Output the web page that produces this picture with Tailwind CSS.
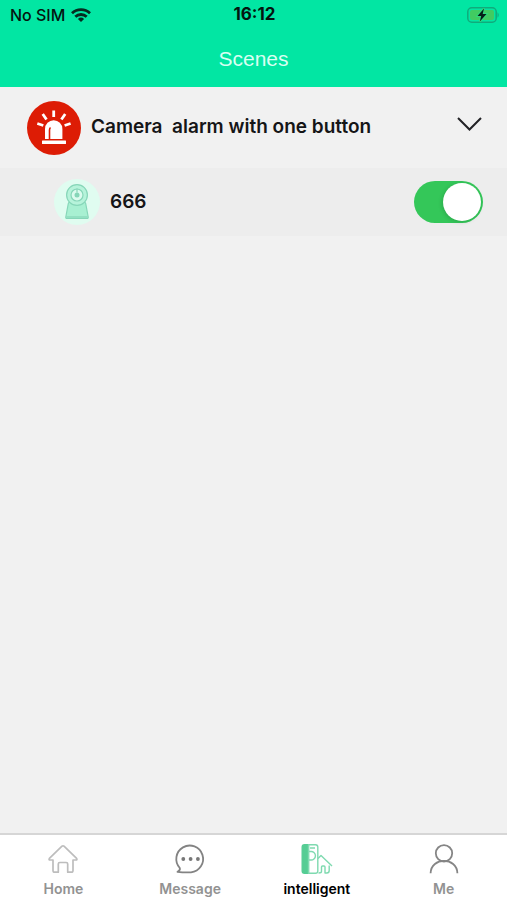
<!DOCTYPE html>
<html lang="en">
<head>
<meta charset="utf-8">
<meta name="viewport" content="width=device-width, initial-scale=1">
<title>Scenes</title>
<script src="https://cdn.jsdelivr.net/npm/@tailwindcss/browser@4"></script>
</head>
<body class="flex min-h-screen flex-col bg-[#f1f1f1] font-['Inter','Liberation_Sans',sans-serif] text-[#151517]">
  <header class="bg-[#02e6a3]">
    <div class="grid h-7 grid-cols-3 items-center pt-px pr-2 pl-2.5 text-[#04150f]">
      <div class="flex items-center gap-1.5 text-base font-medium">
        <span>No SIM</span>
        <svg class="h-4 w-5" viewBox="0 0 20 16" fill="none" stroke="#062b20" stroke-width="2.8" aria-label="Wi-Fi">
          <path d="M1 6.2a13 13 0 0 1 18 0"/>
          <path d="M4.3 9.8a8.2 8.2 0 0 1 11.400 0"/>
          <path d="M10 15 6.900 12a4.500 4.500 0 0 1 6.200 0z" fill="#062b20" stroke="none"/>
        </svg>
      </div>
      <time class="text-center text-[17px] font-bold">16:12</time>
      <svg class="h-4 w-8 justify-self-end" viewBox="0 0 32 16" aria-label="Battery charging">
        <rect x="0.8" y="0.8" width="28.4" height="14.4" rx="4" fill="none" stroke="#10ab7c" stroke-width="1.5"/>
        <rect x="3" y="3" width="24" height="10" rx="2" fill="#42cb61"/>
        <path d="M30.5 5.500c1.600.6 1.600 4.400 0 5z" fill="#10ab7c"/>
        <path d="M17 1.500 10.500 9h3.700l-1.400 5.500L19.500 7h-3.800z" fill="#052018" stroke="#30d87c" stroke-width="2" paint-order="stroke"/>
      </svg>
    </div>
    <h1 class="flex h-[59px] items-center justify-center pt-0.5 font-['Liberation_Sans',sans-serif] text-[21px] text-[#d9fff2]">Scenes</h1>
  </header>

  <main class="flex-1">
    <button type="button" aria-expanded="true" aria-controls="devices" class="flex h-[81px] w-full items-center gap-2.5 pr-6 pl-[27px] text-left">
      <svg class="size-[54px] shrink-0" viewBox="0 0 54 54" aria-hidden="true">
        <circle cx="27" cy="27" r="27" fill="#dd1c05"/>
        <path d="M26.700 9.500v6.500M15.700 13l3.800 5.500M38.200 13l-3.800 5.500M10.300 22.500l6 2M43.600 22.500l-6 2" stroke="#fff" stroke-width="2.800"/>
        <path d="M18 38V28a8.700 8.700 0 0 1 17.400 0v10z" fill="#fff"/>
        <path d="M22.500 38V29q0-1.500 1-2.500" fill="none" stroke="#dd1c05" stroke-width="1.600"/>
        <rect x="15" y="39.500" width="24" height="3.600" rx="0.500" fill="#fff"/>
      </svg>
      <span class="flex-1 whitespace-pre text-[19px] font-semibold">Camera  alarm with one button</span>
      <svg class="mb-2 h-4 w-[27px] shrink-0" viewBox="0 0 27 16" fill="none" stroke="#222226" stroke-width="2" aria-hidden="true">
        <path d="M2 2l11.500 11.500L25 2"/>
      </svg>
    </button>

    <div id="devices" class="flex h-[68px] items-center gap-2.5 bg-[#ededed] pr-6 pl-[54px]">
      <svg class="size-[46px] shrink-0" viewBox="0 0 46 46" fill="none" stroke="#86d6b8" stroke-width="1.200" aria-hidden="true">
        <circle cx="23" cy="23" r="23" fill="#e0fcf0" stroke="none"/>
        <path d="M15.200 23.500h15.600q.7 0 .9 1l2.500 13.500q.2 1.500-1.200 1.500H13q-1.400 0-1.200-1.500l2.500-13.500q.2-1 .9-1z" fill="#a8f0d2"/>
        <circle cx="23" cy="16" r="10.400" fill="#b6f3da"/>
        <circle cx="23" cy="16" r="6" fill="#dcfbee"/>
        <circle cx="23" cy="16" r="2.500" fill="#86d6b8" stroke="none"/>
        <path d="M23 9.500v4"/>
        <path d="M12.500 38h21"/>
      </svg>
      <label for="device-666" class="flex-1 text-[19px] font-semibold">666</label>
      <input id="device-666" type="checkbox" role="switch" checked class="flex h-[42px] w-[69px] shrink-0 appearance-none items-center justify-start rounded-full bg-[#c8c8c8] px-0.5 before:size-[38px] before:rounded-full before:bg-white before:shadow-[-1px_1px_4px_rgba(0,0,0,0.15)] before:content-[''] checked:justify-end checked:bg-[#34c759]">
    </div>
  </main>

  <nav class="grid grid-cols-4 border-t-2 border-[#d6d6d6] bg-white pt-2 pb-px text-sm font-semibold text-[#929292]">
    <a href="#home" class="flex flex-col items-center gap-1">
      <svg class="size-8" viewBox="0 0 32 32" fill="none" stroke="#bdbdbd" stroke-width="1.700" stroke-linejoin="round" aria-hidden="true">
        <path d="M15 3.200q1-.8 2 0l12.600 12.200q1 1.400-.8 1.600H26v10.500q0 1.700-1.700 1.700h-3.600V21q0-1.500-1.500-1.500h-6.400q-1.500 0-1.500 1.500v8.200H7.700Q6 29.200 6 27.500V17H3.200q-1.800-.2-.8-1.600z"/>
      </svg>
      <span>Home</span>
    </a>
    <a href="#message" class="flex flex-col items-center gap-1">
      <svg class="size-8" viewBox="0 0 32 32" fill="none" stroke="#838383" stroke-width="1.800" stroke-linejoin="round" aria-hidden="true">
        <path d="M3.500 28.800q3-1.500 2.300-3.800A13.400 13.400 0 1 1 17 29.300q-7 .3-13.500-.5z"/>
        <g fill="#777" stroke="none"><circle cx="9.300" cy="16" r="1.900"/><circle cx="16.600" cy="16" r="1.900"/><circle cx="23.900" cy="16" r="1.900"/></g>
      </svg>
      <span>Message</span>
    </a>
    <a href="#intelligent" aria-current="page" class="flex flex-col items-center gap-1 text-black">
      <svg class="size-8" viewBox="0 0 32 32" fill="none" stroke="#7fdab0" stroke-width="1.400" stroke-linejoin="round" aria-hidden="true">
        <path d="M7.500 1.700H3.500q-2.300 0-2.300 2.300v24q0 2.300 2.300 2.300h4z" fill="#55cd94" stroke="#55cd94"/>
        <path d="M7.500 1.700h7q2.300 0 2.300 2.300v24q0 2.300-2.300 2.300h-7z"/>
        <path d="M8 8.500h1.500a4.300 4.300 0 1 1 0 8.500H8M9 5h5"/>
        <path d="M17 15.500l3-3 11 10.500M28.200 22.500v5q0 2.500-2.400 2.500H24v-6q0-1-1-1h-1.500q-1 0-1 1v4.500q0 1.500-3 1.500"/>
      </svg>
      <span>intelligent</span>
    </a>
    <a href="#me" class="flex flex-col items-center gap-1">
      <svg class="size-8" viewBox="0 0 32 32" fill="none" stroke="#858585" stroke-width="1.800" aria-hidden="true">
        <circle cx="16" cy="10.300" r="8.200"/>
        <path d="M2.600 30.200C3 13.800 29 13.800 29.400 30.200"/>
      </svg>
      <span>Me</span>
    </a>
  </nav>
</body>
</html>
